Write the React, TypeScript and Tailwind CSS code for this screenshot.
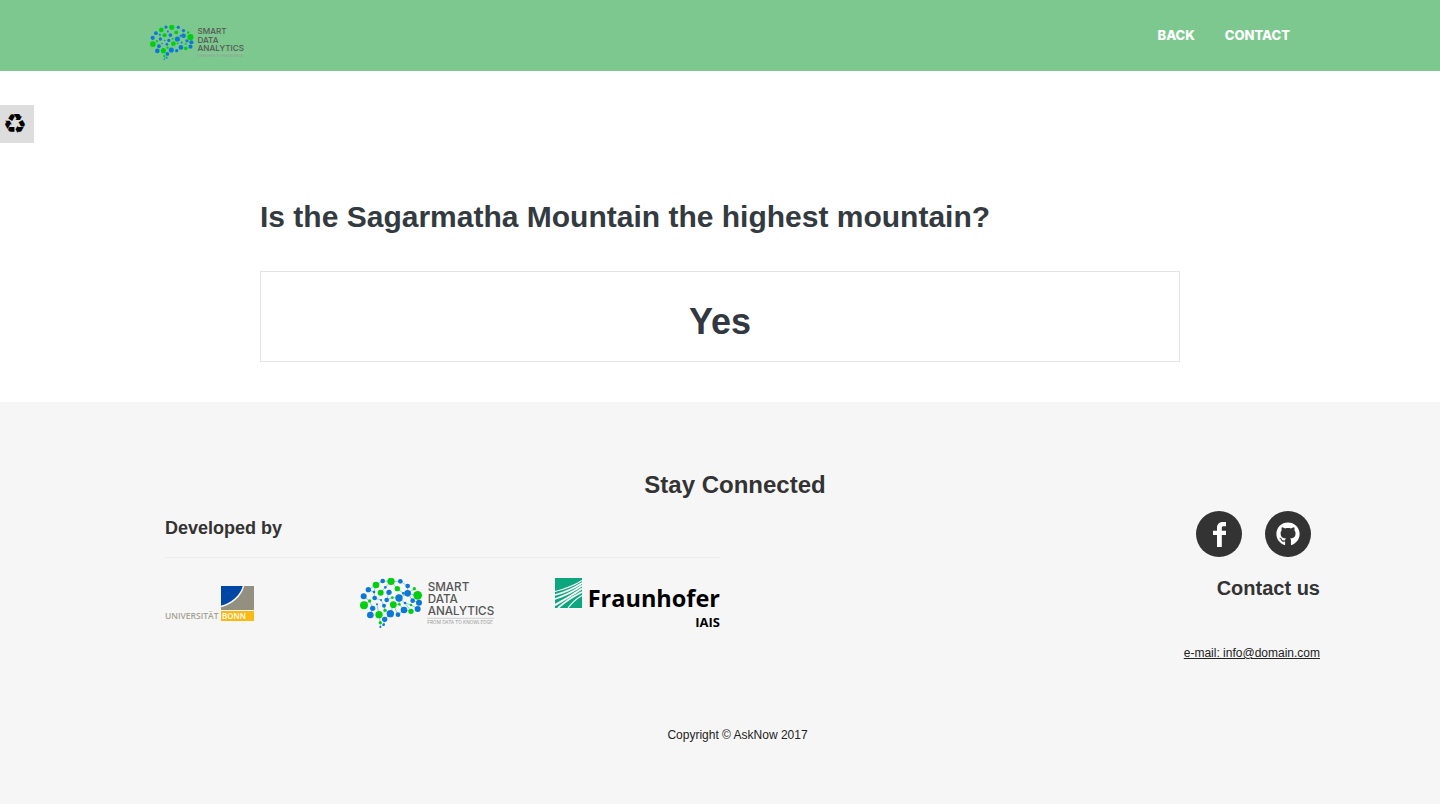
import React from "react";
import { FaGithub } from "react-icons/fa";

const BLUE = "#0a78d6";
const GREEN = "#00cf10";

type Dot = [number, number, number, string];

const DOTS: Dot[] = [
  [93, 10, 11, GREEN], [68, 9, 7, BLUE], [121, 10, 7, BLUE], [48, 21, 10, GREEN],
  [25, 35, 8, BLUE], [76, 28, 4, BLUE], [112, 32, 8, GREEN], [143, 24, 7, BLUE],
  [163, 32, 5, GREEN], [11, 55, 9, BLUE], [62, 44, 9, GREEN], [87, 43, 8, BLUE],
  [130, 46, 4, BLUE], [143, 46, 10, BLUE], [173, 52, 13, GREEN], [42, 42, 4, BLUE],
  [29, 69, 5, GREEN], [44, 60, 7, BLUE], [63, 66, 3, BLUE], [80, 66, 7, BLUE],
  [97, 59, 4, GREEN], [117, 60, 11, BLUE], [135, 75, 4, BLUE], [158, 68, 7, BLUE],
  [177, 74, 9, BLUE], [12, 82, 12, GREEN], [38, 91, 8, BLUE], [51, 79, 3, BLUE],
  [72, 83, 6, BLUE], [100, 80, 10, GREEN], [118, 79, 4, GREEN], [153, 81, 4, GREEN],
  [31, 111, 10, BLUE], [57, 110, 11, GREEN], [75, 97, 5, GREEN], [91, 107, 11, BLUE],
  [132, 96, 10, BLUE], [114, 110, 7, BLUE], [153, 100, 8, GREEN], [173, 93, 9, BLUE],
  [74, 124, 8, BLUE], [61, 134, 5, GREEN], [71, 140, 4, BLUE], [61, 147, 3, BLUE],
];

const LINKS =
  "M25 35L48 21L68 9M25 35L42 42M48 21L42 42L44 60M11 55L29 69L38 91L31 111M11 82L29 69M68 9L93 10L121 10M93 10L112 32L130 46M76 28L62 44M76 28L93 10M87 43L80 66L97 59L117 60L143 46L143 24L121 10M143 46L163 32M143 46L173 52M143 46L158 68L177 74M117 60L135 75L153 81L173 93M117 60L118 79L100 80M44 60L63 66L72 83L75 97L91 107M51 79L57 110L61 134L61 147M74 124L71 140L61 147M91 107L100 80L114 110M91 107L74 124M132 96L118 79M132 96L114 110M132 96L153 100L135 75";

function SmartDataLogo({ className }: { className: string }) {
  return (
    <svg className={className} viewBox="0 0 402 150" role="img" aria-label="Smart Data Analytics">
      <path d={LINKS} fill="none" stroke="#5cb8c4" strokeWidth="2" />
      {DOTS.map(([x, y, r, fill]) => (
        <circle key={`${x}-${y}`} cx={x} cy={y} r={r} fill={fill} />
      ))}
      <g fill="#555" fontFamily="Inter, sans-serif" fontWeight="500" fontSize="35">
        <text x="203" y="38">SMART</text>
        <text x="203" y="76">DATA</text>
        <text x="203" y="112">ANALYTICS</text>
      </g>
      <path d="M201 121H402" stroke="#bbb" strokeWidth="2" />
      <text x="202" y="138" fill="#999" fontFamily="Inter, sans-serif" fontSize="14">
        FROM DATA TO KNOWLEDGE
      </text>
    </svg>
  );
}

function BonnLogo() {
  return (
    <svg className="h-9 w-[89px]" viewBox="0 0 89 36" role="img" aria-label="Universität Bonn">
      <path d="M56 1H89V25H56Z" fill="#939080" />
      <path d="M56 1H78C76 10 68 18 56 21Z" fill="#0047a5" />
      <path d="M78.500 1C76 11 67 18.500 56 21.500" fill="none" stroke="#f5f5f5" strokeWidth="1.400" />
      <path d="M56 26H89V36H56Z" fill="#fdb913" />
      <text x="0" y="34" fill="#a5a294" fontFamily="Open Sans, sans-serif" fontWeight="600" fontSize="8.500">
        UNIVERSITÄT
      </text>
      <text x="57" y="34" fill="#fff" fontFamily="Open Sans, sans-serif" fontWeight="600" fontSize="8">
        BONN
      </text>
    </svg>
  );
}

function FraunhoferLogo() {
  return (
    <svg className="h-[50px] w-[165px] overflow-visible" viewBox="0 0 165 50" role="img" aria-label="Fraunhofer IAIS">
      <path d="M0 0H27V30H0Z" fill="#0ba57e" />
      <g fill="none" stroke="#f5f5f5">
        <path d="M0 13.500Q15 10 27 2.500" strokeWidth="1.200" />
        <path d="M0 17Q15 13 27 5" strokeWidth="1.600" />
        <path d="M0 21Q15 16 27 7.500" strokeWidth="1.800" />
        <path d="M0 27Q13 20 27 10.500" strokeWidth="2" />
        <path d="M3 30Q13 21 27 14" strokeWidth="1.800" />
        <path d="M13 30Q19 22 27 17.500" strokeWidth="1.200" />
      </g>
      <g fill="#000" fontFamily="Open Sans, sans-serif" fontWeight="700" textAnchor="end">
        <text x="165" y="29" fontSize="23.500">Fraunhofer</text>
        <text x="165" y="49" fontSize="13">IAIS</text>
      </g>
    </svg>
  );
}

function FacebookGlyph() {
  return (
    <svg className="h-[25px] w-[13px]" viewBox="0 0 13 25" fill="currentColor" aria-hidden="true">
      <path d="M13 0V4.200H10.600C9.400 4.200 8.800 4.800 8.800 6V8.800H13V13H8.800V25H4V13H0V8.800H4V5.800C4 2.200 6.200 0 9.600 0Z" />
    </svg>
  );
}

export default function App() {
  return (
    <div className="flex min-h-screen flex-col bg-white font-['Liberation_Sans',Arial,sans-serif] text-[#333]">
      <header className="bg-[#7dc88f] px-6">
        <div className="mx-auto flex max-w-[1140px] items-start justify-between pt-[25px] pb-[11px]">
          <a href="#home">
            <SmartDataLogo className="h-[35px] w-[94px]" />
          </a>
          <nav className="flex gap-[30px] font-[Inter,sans-serif] text-[13px] leading-5 font-extrabold text-white">
            <a href="#back">BACK</a>
            <a href="#contact">CONTACT</a>
          </nav>
        </div>
      </header>

      <main className="pt-[34px] pb-10">
        <button
          type="button"
          aria-label="Reset"
          className="flex h-[38px] w-[34px] items-center bg-[#ddd] pl-[3px] font-['DejaVu_Sans',sans-serif] text-[27px] leading-8 text-black"
        >
          ♻
        </button>
        <div className="mx-auto mt-[54px] max-w-[920px]">
          <h1 className="text-[30px] leading-10 font-bold text-[#333a40]">
            Is the Sagarmatha Mountain the highest mountain?
          </h1>
          <div className="mt-[34px] border border-[#e3e3e3] pt-[26px] pb-[15px] text-center">
            <p className="text-4xl leading-12 font-bold text-[#333740]">Yes</p>
          </div>
        </div>
      </main>

      <footer className="grow bg-[#f6f6f6] pt-[67px] pb-[60px] pl-[30px]">
        <div className="mx-auto max-w-[1170px]">
          <h2 className="text-center text-2xl leading-8 font-bold">Stay Connected</h2>
          <div className="flex justify-between">
            <section className="ml-[15px] w-[555px] pt-[15px]">
              <h3 className="border-b border-[#ececec] pb-[17px] text-lg leading-6 font-bold">Developed by</h3>
              <div className="mt-5 grid grid-cols-[195px_195px_165px] items-start">
                <div className="pt-[7px]">
                  <BonnLogo />
                </div>
                <SmartDataLogo className="h-[50px] w-[134px]" />
                <FraunhoferLogo />
              </div>
            </section>
            <section className="flex flex-col items-end pt-[10px]">
              <div className="mr-[9px] flex gap-[23px]">
                <a
                  href="#facebook"
                  aria-label="Facebook"
                  className="flex size-[46px] items-center justify-center rounded-full bg-[#333] text-white"
                >
                  <FacebookGlyph />
                </a>
                <a
                  href="#github"
                  aria-label="GitHub"
                  className="flex size-[46px] items-center justify-center rounded-full bg-[#333] text-white"
                >
                  <FaGithub size={24} />
                </a>
              </div>
              <h3 className="mt-[17px] text-xl leading-7 font-bold">Contact us</h3>
              <a href="mailto:info@domain.com" className="mt-[41px] text-xs leading-5 text-[#222] underline">
                e-mail: info@domain.com
              </a>
            </section>
          </div>
          <p className="mt-[62px] pl-[5px] text-center text-xs leading-5 text-[#222]">Copyright © AskNow 2017</p>
        </div>
      </footer>
    </div>
  );
}
